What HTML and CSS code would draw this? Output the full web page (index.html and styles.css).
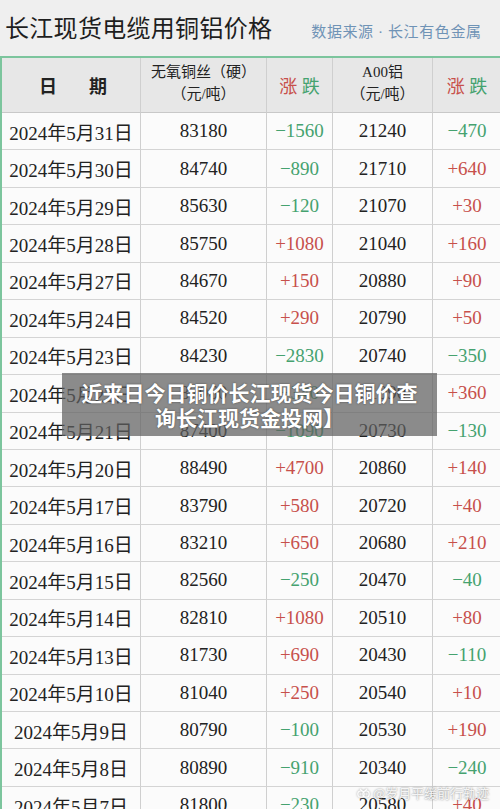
FILE: index.html
```html
<!DOCTYPE html>
<html lang="zh-CN">
<head>
    <meta charset="UTF-8">
    <meta name="viewport" content="width=device-width, initial-scale=1.0">
    <title>长江现货电缆用铜铝价格</title>
    <link rel="stylesheet" href="styles.css">
</head>
<body>
    <article class="sheet">
        <header class="sheet-title">
            <h1>长江现货电缆用铜铝价格</h1>
            <p class="source">数据来源 · 长江有色金属</p>
        </header>

        <div class="grid">
            <div class="cell head date-head">日<span class="gap"></span>期</div>
            <div class="cell head two">无氧铜丝（硬）<br>（元/吨）</div>
            <div class="cell head"><span class="up">涨</span>&nbsp;<span class="down">跌</span></div>
            <div class="cell head two">A00铝<br>（元/吨）</div>
            <div class="cell head"><span class="up">涨</span>&nbsp;<span class="down">跌</span></div>

            <div class="cell">2024年5月31日</div><div class="cell">83180</div><div class="cell down">−1560</div><div class="cell">21240</div><div class="cell down">−470</div>
            <div class="cell">2024年5月30日</div><div class="cell">84740</div><div class="cell down">−890</div><div class="cell">21710</div><div class="cell up">+640</div>
            <div class="cell">2024年5月29日</div><div class="cell">85630</div><div class="cell down">−120</div><div class="cell">21070</div><div class="cell up">+30</div>
            <div class="cell">2024年5月28日</div><div class="cell">85750</div><div class="cell up">+1080</div><div class="cell">21040</div><div class="cell up">+160</div>
            <div class="cell">2024年5月27日</div><div class="cell">84670</div><div class="cell up">+150</div><div class="cell">20880</div><div class="cell up">+90</div>
            <div class="cell">2024年5月24日</div><div class="cell">84520</div><div class="cell up">+290</div><div class="cell">20790</div><div class="cell up">+50</div>
            <div class="cell">2024年5月23日</div><div class="cell">84230</div><div class="cell down">−2830</div><div class="cell">20740</div><div class="cell down">−350</div>
            <div class="cell">2024年5月22日</div><div class="cell">87060</div><div class="cell down">−340</div><div class="cell">21090</div><div class="cell up">+360</div>
            <div class="cell">2024年5月21日</div><div class="cell">87400</div><div class="cell down">−1090</div><div class="cell">20730</div><div class="cell down">−130</div>
            <div class="cell">2024年5月20日</div><div class="cell">88490</div><div class="cell up">+4700</div><div class="cell">20860</div><div class="cell up">+140</div>
            <div class="cell">2024年5月17日</div><div class="cell">83790</div><div class="cell up">+580</div><div class="cell">20720</div><div class="cell up">+40</div>
            <div class="cell">2024年5月16日</div><div class="cell">83210</div><div class="cell up">+650</div><div class="cell">20680</div><div class="cell up">+210</div>
            <div class="cell">2024年5月15日</div><div class="cell">82560</div><div class="cell down">−250</div><div class="cell">20470</div><div class="cell down">−40</div>
            <div class="cell">2024年5月14日</div><div class="cell">82810</div><div class="cell up">+1080</div><div class="cell">20510</div><div class="cell up">+80</div>
            <div class="cell">2024年5月13日</div><div class="cell">81730</div><div class="cell up">+690</div><div class="cell">20430</div><div class="cell down">−110</div>
            <div class="cell">2024年5月10日</div><div class="cell">81040</div><div class="cell up">+250</div><div class="cell">20540</div><div class="cell up">+10</div>
            <div class="cell">2024年5月9日</div><div class="cell">80790</div><div class="cell down">−100</div><div class="cell">20530</div><div class="cell up">+190</div>
            <div class="cell">2024年5月8日</div><div class="cell">80890</div><div class="cell down">−910</div><div class="cell">20340</div><div class="cell down">−240</div>
            <div class="cell">2024年5月7日</div><div class="cell">81800</div><div class="cell down">−230</div><div class="cell">20580</div><div class="cell up">+40</div>
        </div>

        <!-- 위에 덮이는 제목 캡션 -->
        <div class="caption">近来日今日铜价长江现货今日铜价查<br>询长江现货金投网】</div>

        <!-- 워터마크 -->
        <div class="watermark">
            <svg width="13" height="12" viewBox="0 0 13 12"><circle cx="4" cy="7" r="3.2" fill="none" stroke="currentColor" stroke-width="1.3"/><circle cx="9" cy="7" r="3.2" fill="none" stroke="currentColor" stroke-width="1.3"/><path d="M3 2 L5 4 M10 2 L8 4" stroke="currentColor" stroke-width="1.3"/></svg>
            <span>@岁月平缓前行轨迹</span>
        </div>
    </article>
</body>
</html>
```

FILE: styles.css
```css
*{margin:0;padding:0;box-sizing:border-box;}

html,body{height:809px;overflow:hidden;}
body{
    background:#efefef;
    font-family:"Liberation Serif","Noto Sans CJK SC",serif;
    color:#222;
}

.sheet{
    position:relative;
    width:500px;
}

.sheet-title{
    height:56px;
    display:flex;
    align-items:center;
    padding:0 0 0 5px;
    background:#efefef;
}
.sheet-title h1{
    font-weight:normal;
    font-size:24px;
    letter-spacing:0.3px;
    color:#1e1e1e;
    padding-bottom:4px;
}
.source{
    margin-left:39px;
    font-size:15px;
    letter-spacing:0.6px;
    color:#6f93b6;
    padding-top:4px;
}

.grid{
    display:grid;
    grid-template-columns:139px 126px 66px 100px 69px;
    grid-template-rows:55px;
    grid-auto-rows:37.44px;
    border-top:2px solid #7cc59d;
    border-left:2px solid #7cc59d;
    background:#fbfbfb;
}
.cell{
    display:flex;
    align-items:center;
    justify-content:center;
    border-right:1px solid #cfcfcf;
    border-bottom:1px solid #d4d4d4;
    font-size:19px;
    white-space:nowrap;
}
.head{
    background:#e7e7e7;
    font-size:18px;
    border-bottom:1px solid #c8c8c8;
}
.head.two{
    font-size:15px;
    line-height:22px;
    text-align:center;
    padding-bottom:4px;
}
.date-head{
    font-weight:bold;
    font-size:18px;
    padding-left:4px;
}
.gap{display:inline-block;width:32px;}

.up{color:#c7504b;}
.down{color:#45a26f;}

.caption{
    position:absolute;
    left:62px;top:373px;
    width:375px;height:63px;
    background:rgba(96,96,96,0.72);
    color:#fff;
    font-family:"Noto Sans CJK SC",sans-serif;
    font-weight:bold;
    font-size:21px;
    line-height:25px;
    text-align:center;
    padding-top:7px;
    text-shadow:0 0 2px rgba(0,0,0,0.5);
}

.watermark{
    position:absolute;
    left:357px;top:783px;
    display:flex;
    align-items:center;
    gap:3px;
    color:rgba(255,255,255,0.9);
    font-family:"Noto Sans CJK SC",sans-serif;
    font-size:13px;
    text-shadow:0 0 2px rgba(0,0,0,0.55);
}
.watermark svg{filter:drop-shadow(0 0 1px rgba(0,0,0,0.4));}
```
